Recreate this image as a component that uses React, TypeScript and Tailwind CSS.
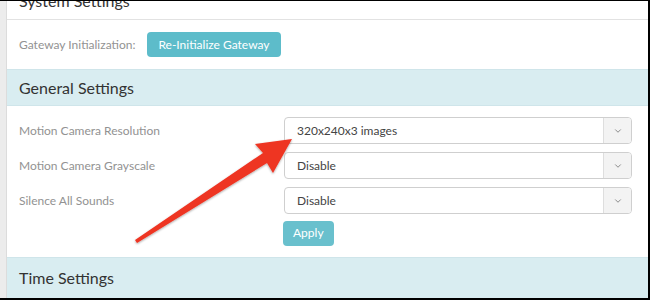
import { ChevronDown } from 'lucide-react';

const font = { fontFamily: 'Lato, "Noto Sans", sans-serif' };

function SelectBox({ value }: { value: string }) {
    return (
        <div className="flex h-[27px] w-[348px] rounded-[4px] border border-[#cfcfcf] bg-white overflow-hidden">
            <div className="flex-1 flex items-center pl-[12px] text-[12px] text-[#444]">{value}</div>
            <div className="w-[28px] flex items-center justify-center bg-[#f3f3f3] border-l border-[#dedede]">
                <ChevronDown size={10} strokeWidth={2} className="text-[#777]" />
            </div>
        </div>
    );
}

function SettingRow({ label, value }: { label: string; value: string }) {
    return (
        <div className="flex items-center h-[35px]">
            <span className="w-[265px] text-[12px] text-[#929292]">{label}</span>
            <SelectBox value={value} />
        </div>
    );
}

export default function App() {
    return (
        <div className="relative w-[650px] h-[300px] flex bg-white border-t border-b-2 border-r-2 border-black overflow-hidden" style={font}>
            <div className="w-[7px] bg-[#ececec] border-r border-[#dcdcdc]" />
            <div className="flex-1 flex flex-col">
                <div className="h-[19px] overflow-hidden border-b border-[#e2e2e2] px-[12px]">
                    <p className="-mt-[12px] text-[16px] text-[#333]">System Settings</p>
                </div>
                <div className="h-[49px] flex items-center px-[12px] gap-[12px]">
                    <span className="text-[12px] text-[#929292]">Gateway Initialization:</span>
                    <button className="h-[25px] px-[11px] rounded-[4px] bg-[#5dbcca] text-white text-[12px]">Re-Initialize Gateway</button>
                </div>
                <div className="h-[37px] flex items-center px-[12px] bg-[#d9edf1] border-t border-b border-[#cfe5ea]">
                    <span className="text-[16px] text-[#333]">General Settings</span>
                </div>
                <div className="flex flex-col px-[12px] pt-[7px]">
                    <SettingRow label="Motion Camera Resolution" value="320x240x3 images" />
                    <SettingRow label="Motion Camera Grayscale" value="Disable" />
                    <SettingRow label="Silence All Sounds" value="Disable" />
                    <div className="pl-[264px] pt-[1px]">
                        <button className="h-[25px] px-[10px] rounded-[4px] bg-[#69c0cd] text-white text-[12px]">Apply</button>
                    </div>
                </div>
                <div className="mt-[11px] flex-1 flex items-center px-[12px] bg-[#d9edf1] border-t border-[#cfe5ea]">
                    <span className="text-[16px] text-[#333]">Time Settings</span>
                </div>
            </div>
            <svg className="absolute left-0 top-0 pointer-events-none" width="650" height="300" viewBox="0 0 650 300">
                <defs>
                    <filter id="sh" x="-20%" y="-20%" width="140%" height="140%">
                        <feDropShadow dx="0" dy="1" stdDeviation="1.2" floodColor="#000" floodOpacity="0.35" />
                    </filter>
                </defs>
                <path
                    d="M292 138 L255 143 L263 152 L135 239 L137 242 L267 162 L273 172 Z"
                    fill="#ee3424"
                    filter="url(#sh)"
                />
            </svg>
        </div>
    );
}
